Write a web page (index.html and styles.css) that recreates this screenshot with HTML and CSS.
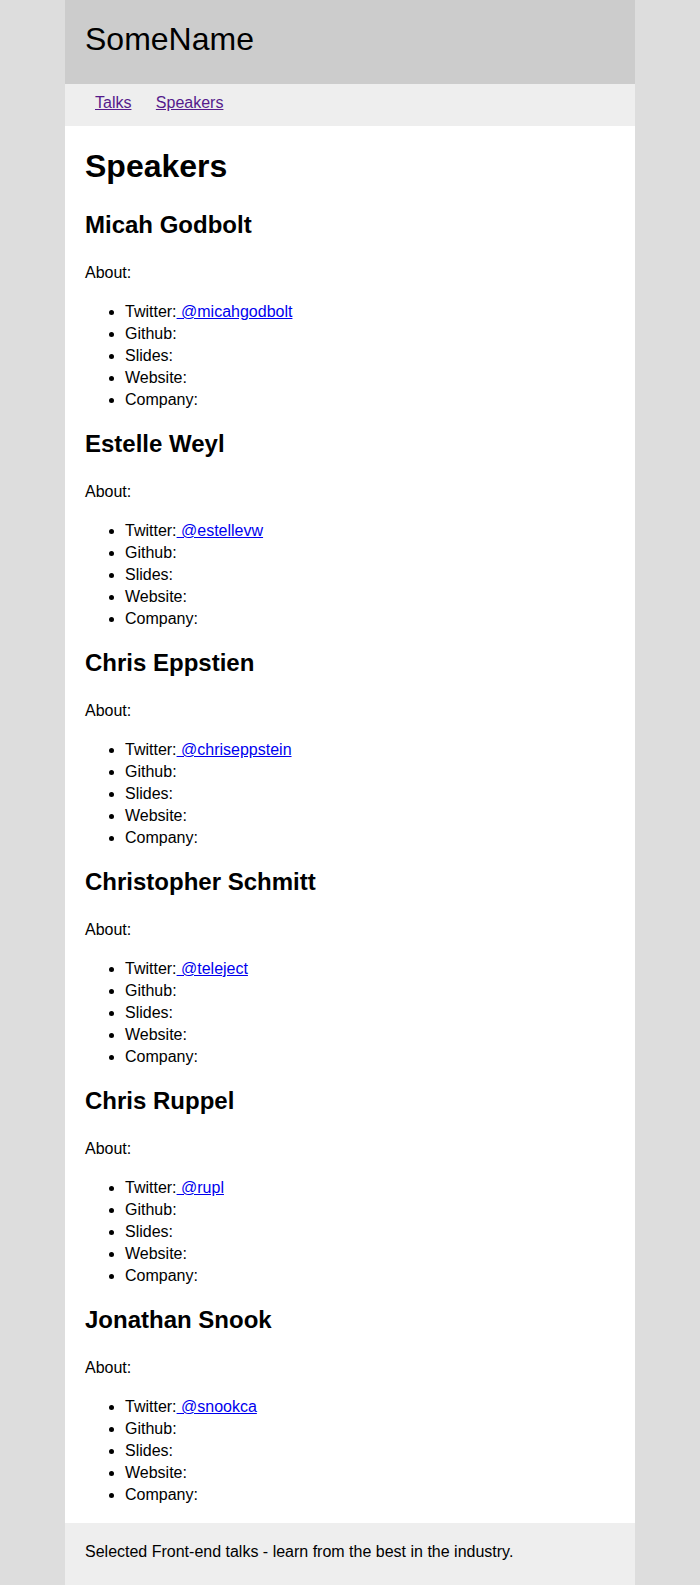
FILE: index.html
```html
<!DOCTYPE html>
<html lang="en">
<head>
<meta charset="utf-8">
<title>Speakers - SomeName</title>
<link rel="stylesheet" href="styles.css">
</head>
<body>
<div class="page">
  <header class="site-header">
    <div class="site-name">SomeName</div>
  </header>
  <nav class="site-nav">
    <ul class="nav-list">
      <li><a class="nav-link" href="#talks">Talks</a></li>
      <li><a class="nav-link" href="#speakers">Speakers</a></li>
    </ul>
  </nav>
  <main class="content">
    <h1 class="page-title">Speakers</h1>

    <section class="speaker">
      <h2 class="speaker-name">Micah Godbolt</h2>
      <p class="about">About:</p>
      <ul class="details">
        <li>Twitter:<a class="link" href="#"> @micahgodbolt</a></li>
        <li>Github:</li>
        <li>Slides:</li>
        <li>Website:</li>
        <li>Company:</li>
      </ul>
    </section>

    <section class="speaker">
      <h2 class="speaker-name">Estelle Weyl</h2>
      <p class="about">About:</p>
      <ul class="details">
        <li>Twitter:<a class="link" href="#"> @estellevw</a></li>
        <li>Github:</li>
        <li>Slides:</li>
        <li>Website:</li>
        <li>Company:</li>
      </ul>
    </section>

    <section class="speaker">
      <h2 class="speaker-name">Chris Eppstien</h2>
      <p class="about">About:</p>
      <ul class="details">
        <li>Twitter:<a class="link" href="#"> @chriseppstein</a></li>
        <li>Github:</li>
        <li>Slides:</li>
        <li>Website:</li>
        <li>Company:</li>
      </ul>
    </section>

    <section class="speaker">
      <h2 class="speaker-name">Christopher Schmitt</h2>
      <p class="about">About:</p>
      <ul class="details">
        <li>Twitter:<a class="link" href="#"> @teleject</a></li>
        <li>Github:</li>
        <li>Slides:</li>
        <li>Website:</li>
        <li>Company:</li>
      </ul>
    </section>

    <section class="speaker">
      <h2 class="speaker-name">Chris Ruppel</h2>
      <p class="about">About:</p>
      <ul class="details">
        <li>Twitter:<a class="link" href="#"> @rupl</a></li>
        <li>Github:</li>
        <li>Slides:</li>
        <li>Website:</li>
        <li>Company:</li>
      </ul>
    </section>

    <section class="speaker">
      <h2 class="speaker-name">Jonathan Snook</h2>
      <p class="about">About:</p>
      <ul class="details">
        <li>Twitter:<a class="link" href="#"> @snookca</a></li>
        <li>Github:</li>
        <li>Slides:</li>
        <li>Website:</li>
        <li>Company:</li>
      </ul>
    </section>
  </main>
  <footer class="site-footer">
    <p class="footer-text">Selected Front-end talks - learn from the best in the industry.</p>
  </footer>
</div>
</body>
</html>
```

FILE: styles.css
```css
html, body {
  margin: 0;
  padding: 0;
}

body {
  background: #dddddd;
  color: #000000;
  font-family: "Liberation Sans", Arial, Helvetica, sans-serif;
  font-size: 16px;
  line-height: 22px;
}

.page {
  width: 570px;
  margin: 0 auto;
  background: #ffffff;
}

.site-header {
  background: #cccccc;
  padding: 19px 20px 25px;
}

.site-name {
  font-size: 32px;
  line-height: 40px;
  font-weight: normal;
}

.site-nav {
  background: #eeeeee;
  height: 42px;
  box-sizing: border-box;
  padding: 8px 20px 12px;
}

.nav-list {
  list-style: none;
  margin: 0;
  padding: 0;
  display: flex;
  gap: 4.4px;
}

.nav-link {
  display: block;
  padding: 0 10px;
  color: #551a8b;
  text-decoration: underline;
}

.content {
  display: flow-root;
  padding: 0 20px;
}

.page-title {
  font-size: 32px;
  line-height: 40px;
  font-weight: bold;
  margin: 20px 0 24px;
}

.speaker-name {
  font-size: 24px;
  line-height: 30px;
  font-weight: bold;
  margin: 18px 0 22px;
}

.speaker:first-of-type .speaker-name {
  margin-top: 0;
}

.about {
  margin: 0;
}

.details {
  margin: 17px 0;
  padding-left: 40px;
  list-style: disc;
}

.link {
  color: #0000ee;
  text-decoration: underline;
}

.site-footer {
  background: #eeeeee;
  padding: 18px 20px 30px;
}

.footer-text {
  margin: 0;
}
```
